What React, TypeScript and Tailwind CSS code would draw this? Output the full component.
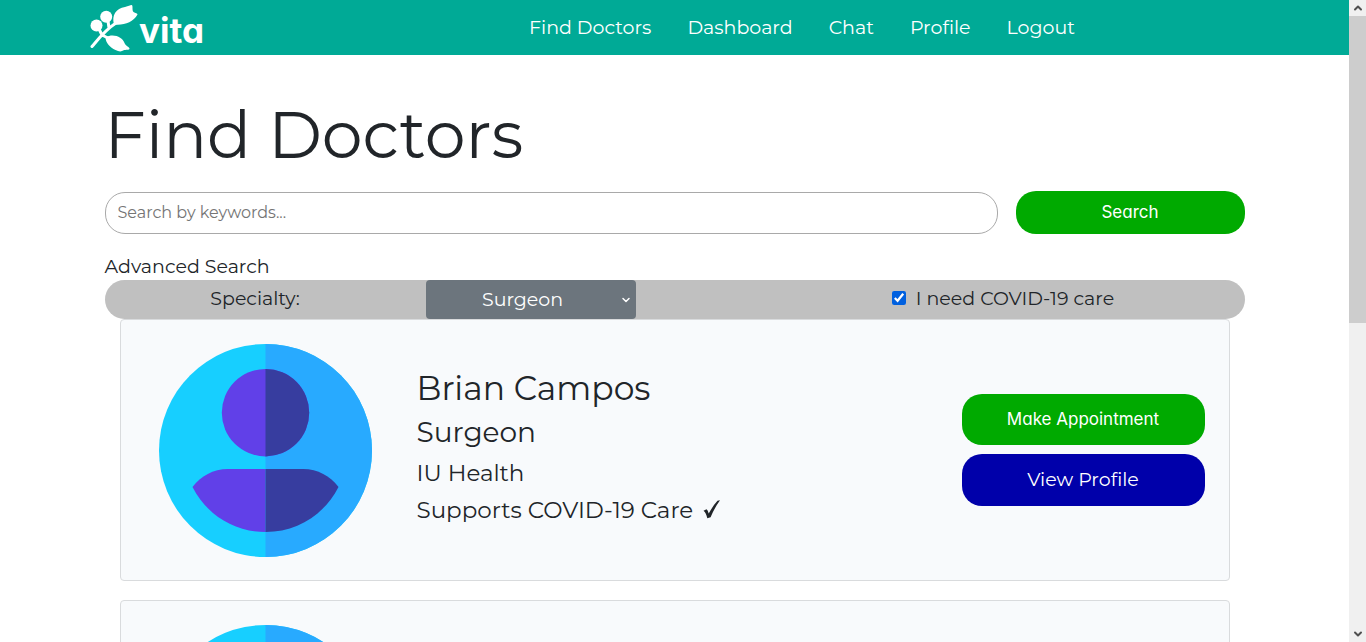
import { ChevronDown, ChevronUp } from "lucide-react";

const links = ["Find Doctors", "Dashboard", "Chat", "Profile", "Logout"];

const doctors = [
  { name: "Brian Campos", specialty: "Surgeon", hospital: "IU Health" },
  { name: "Maria Lopez", specialty: "Surgeon", hospital: "IU Health" },
];

function Logo() {
  return (
    <a href="#" className="flex h-full items-center text-white" aria-label="vita">
      <svg width="48" height="48" viewBox="0 0 48 48" fill="currentColor" aria-hidden="true">
        <circle cx="6.500" cy="21.500" r="6" />
        <circle cx="16.200" cy="12.800" r="6" />
        <path d="M24 20.500C21.500 11 26 4.500 35 3C38.500 2 40 1 41.500 1C43.500 1.500 41.500 6 43.500 8C45.500 9.500 47.500 9 47.500 10.500C43 18.500 34 21.500 24 20.500Z" />
        <path d="M15.500 33C24 29 32.500 33 34.500 39C35.500 42 40 43 39.500 45C38 46.500 35 45 32 47C30 48 28 47 25.500 46C20 43.500 15.500 39 15.500 33Z" />
        <path d="M2 42.500C8 35.500 15 26 26 19M9 25L12 31M18 17L19 24M12 31L20 35" fill="none" stroke="currentColor" strokeWidth="3" strokeLinecap="round" />
      </svg>
      <span className="pt-1 pl-px font-['Inter',sans-serif] text-[35px] leading-10 font-bold [font-feature-settings:'cv11']">vita</span>
    </a>
  );
}

function Avatar() {
  return (
    <svg className="size-[213px] shrink-0" viewBox="0 0 213 213" aria-hidden="true">
      <circle cx="106.500" cy="106.500" r="106.500" fill="#17cfff" />
      <path d="M106.500 0A106.500 106.500 0 0 1 106.500 213Z" fill="#28aaff" />
      <circle cx="106.500" cy="68.700" r="43.700" fill="#6140e8" />
      <path d="M106.500 25A43.700 43.700 0 0 1 106.500 112.400Z" fill="#373d9f" />
      <path d="M106.500 125H69C54 125 42 132 33.500 143C48 171 75 188 106.500 188Z" fill="#6140e8" />
      <path d="M106.500 125H144C159 125 171 132 179.500 143C165 171 138 188 106.500 188Z" fill="#373d9f" />
    </svg>
  );
}

function CheckMark() {
  return (
    <svg width="18" height="19" viewBox="0 0 18 19" fill="currentColor" role="img" aria-label="Yes">
      <path d="M.5 10.800L3.500 9.300C4.600 10 5 11.500 5.700 13.400C8.400 8.600 11.300 4.300 14.500.8L17 .2C13.200 5.500 10.200 11 7.600 17.300L4.300 18.200C3.400 14.800 2.500 12 .5 10.800Z" />
    </svg>
  );
}

function DoctorCard({ name, specialty, hospital }: { name: string; specialty: string; hospital: string }) {
  return (
    <article className="flex items-center rounded border border-[#d9dbdd] bg-[#f8fafc] pt-6 pr-6 pb-[23px] pl-[38px]">
      <Avatar />
      <div className="ml-[45px] flex-1 pb-1.5">
        <h2 className="text-[33px] leading-10">{name}</h2>
        <p className="mt-1 text-[28px] leading-10">{specialty}</p>
        <p className="mt-[3px] text-[23px] leading-9">{hospital}</p>
        <p className="mt-px flex items-center gap-2.5 text-[23px] leading-9">
          Supports COVID-19 Care <CheckMark />
        </p>
      </div>
      <div className="flex w-[243px] flex-col gap-[9px] pb-0.5">
        <button className="h-[51px] rounded-[20px] bg-[#00aa00] pt-0.5 font-['Inter',sans-serif] text-[17px] text-white [font-feature-settings:'cv11']">
          Make Appointment
        </button>
        <button className="h-[52px] rounded-[20px] bg-[#0000aa] pt-0.5 text-[19px] text-white">View Profile</button>
      </div>
    </article>
  );
}

export default function App() {
  return (
    <div className="flex h-screen bg-white font-['Montserrat',sans-serif] text-[#212529]">
      <div className="min-w-0 flex-1 overflow-y-auto [scrollbar-width:none]">
        <header className="flex h-[55px] bg-[#00aa96] pl-[90px]">
          <div className="w-[439px]">
            <Logo />
          </div>
          <nav className="flex items-center gap-9 pt-0.5 text-[19px] text-white">
            {links.map((link) => (
              <a key={link} href="#">{link}</a>
            ))}
          </nav>
        </header>
        <main className="mx-auto max-w-[1140px] pt-10 pb-8">
          <h1 className="text-[65px] leading-[80px]">Find Doctors</h1>
          <form className="mt-4 flex items-center gap-[18px]" onSubmit={(e) => e.preventDefault()}>
            <input
              type="text"
              aria-label="Search by keywords"
              placeholder="Search by keywords..."
              className="h-[42px] min-w-0 flex-1 rounded-[20px] border border-[#a9a9a9] px-3 text-base placeholder:text-[#757575]"
            />
            <button className="h-[43px] w-[229px] rounded-[20px] bg-[#00aa00] font-['Inter',sans-serif] text-[17px] text-white [font-feature-settings:'cv11']">
              Search
            </button>
          </form>
          <p className="mt-5 text-[19px] leading-[26px]">Advanced Search</p>
          <div className="flex h-[39px] items-center rounded-[20px] bg-[#c0c0c0] text-[19px]">
            <label htmlFor="specialty" className="mr-5 w-[301px] text-center">Specialty:</label>
            <div className="relative h-full w-[210px]">
              <select
                id="specialty"
                defaultValue="Surgeon"
                className="h-full w-full appearance-none rounded bg-[#6c757d] pt-0.5 pr-4 text-center text-white [text-align-last:center]"
              >
                <option>Surgeon</option>
              </select>
              <ChevronDown className="pointer-events-none absolute top-3.5 right-1 size-3 text-white" strokeWidth={3} />
            </div>
            <label className="ml-auto flex w-[483px] items-center justify-center gap-2.5">
              <input type="checkbox" defaultChecked className="mb-1 size-3.5 accent-[#0060df]" />
              I need COVID-19 care
            </label>
          </div>
          <section className="flex flex-col gap-[19px] px-[15px]">
            {doctors.map((doctor) => (
              <DoctorCard key={doctor.name} {...doctor} />
            ))}
          </section>
        </main>
      </div>
      <div className="flex w-[17px] flex-col items-center bg-[#f0f0f0] text-[#505050]" aria-hidden="true">
        <ChevronUp className="h-4 w-3" strokeWidth={4} />
        <div className="h-[307px] w-full bg-[#cdcdcd]" />
        <ChevronDown className="mt-auto h-4 w-3" strokeWidth={4} />
      </div>
    </div>
  );
}
